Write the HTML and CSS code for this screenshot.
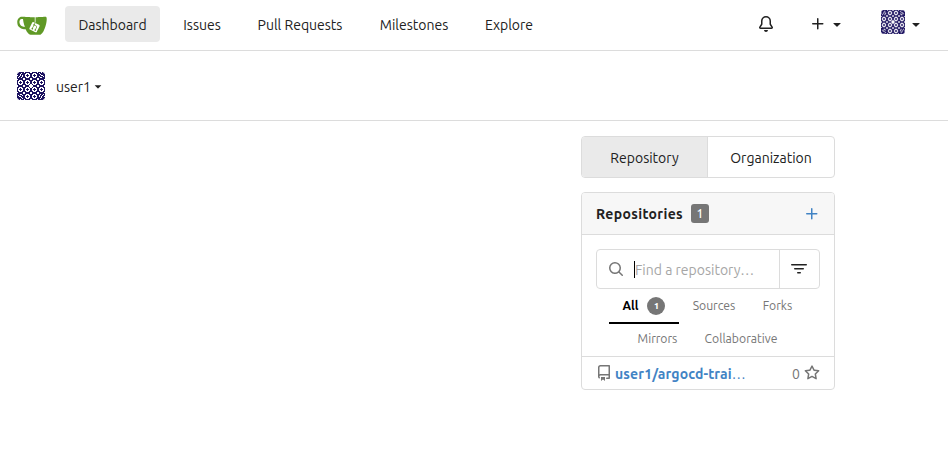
FILE: index.html
```html
<!DOCTYPE html>
<html lang="en">
<head>
<meta charset="utf-8">
<title>user1 - Dashboard</title>
<link rel="stylesheet" href="styles.css">
</head>
<body>
<svg class="defs" width="0" height="0" aria-hidden="true">
  <defs>
    <pattern id="rings" width="7" height="7" patternUnits="userSpaceOnUse">
      <rect width="7" height="7" fill="#1c1260"/>
      <path d="M2 1h3v1h1v3H5v1H2V5H1V2h1z" fill="#fff"/>
      <path d="M3 2h1v1h1v1H4v1H3V4H2V3h1z" fill="#1c1260"/>
      <path d="M0 0h1v1H0zM6 0h1v1H6zM0 6h1v1H0zM6 6h1v1H6z" fill="#fff"/>
    </pattern>
    <g id="corner">
      <rect width="7" height="7" fill="#1c1260"/>
      <path d="M0 0h2v1H1v1H0zM4 1h1v1H4zM3 2h1v2H3zM2 4h1v1H2zM1 5h1v1H1zM5 3h1v2H5zM4 5h1v1H4zM6 6h1v1H6zM0 3h1v1H0z" fill="#fff"/>
    </g>
    <symbol id="identicon" viewBox="0 0 28 28">
      <rect width="28" height="28" fill="url(#rings)"/>
      <use href="#corner"/>
      <use href="#corner" transform="translate(28 0) rotate(90)"/>
      <use href="#corner" transform="translate(28 28) rotate(180)"/>
      <use href="#corner" transform="translate(0 28) rotate(270)"/>
      <path d="M13 12h2v1h1v2h-1v1h-2v-1h-1v-2h1z" fill="#fff"/>
    </symbol>
    <symbol id="caret" viewBox="0 0 16 16"><path d="m4.427 7.427 3.396 3.396a.25.25 0 0 0 .354 0l3.396-3.396A.25.25 0 0 0 11.396 7H4.604a.25.25 0 0 0-.177.427"/></symbol>
    <symbol id="plus" viewBox="0 0 16 16"><path d="M7.75 2a.75.75 0 0 1 .75.75V7h4.25a.75.75 0 0 1 0 1.5H8.5v4.25a.75.75 0 0 1-1.5 0V8.5H2.75a.75.75 0 0 1 0-1.5H7V2.75A.75.75 0 0 1 7.75 2"/></symbol>
  </defs>
</svg>
<nav class="navbar">
  <a class="logo"><svg width="30" height="30" viewBox="0 0 640 640">
    <path fill="#fff" d="m395.9 484.2-126.9-61c-12.5-6-17.9-21.2-11.8-33.8l61-126.9c6-12.5 21.2-17.9 33.8-11.8 17.2 8.3 27.1 13 27.1 13l-.1-109.2 16.7-.1.1 117.1s57.4 24.2 83.1 40.1c3.7 2.3 10.2 6.8 12.9 14.4 2.1 6.1 2 13.1-1 19.3l-61 126.9c-6.2 12.7-21.4 18.1-33.9 12z"/>
    <path fill="#609926" d="M622.7 149.8c-4.1-4.1-9.6-4-9.6-4s-117.2 6.6-177.9 8c-13.3.3-26.5.6-39.6.7v117.2c-5.5-2.6-11.1-5.3-16.6-7.9 0-36.4-.1-109.2-.1-109.2-29 .4-89.2-2.2-89.2-2.2s-141.4-7.1-156.8-8.5c-9.8-.6-22.5-2.1-39 1.5-8.7 1.8-33.5 7.4-53.8 26.9C-4.9 212.4 6.6 276.2 8 285.8c1.7 11.7 6.9 44.2 31.7 72.5 45.8 56.1 144.4 54.8 144.4 54.8s12.1 28.9 30.6 55.5c25 33.1 50.7 58.9 75.7 62 63 0 188.9-.1 188.9-.1s12 .1 28.3-10.3c14-8.5 26.5-23.4 26.5-23.4S547 483 565 451.5c5.5-9.7 10.1-19.1 14.1-28 0 0 55.2-117.1 55.2-231.1-1.1-34.5-9.6-40.6-11.6-42.6zM125.6 353.9c-25.9-8.5-36.9-18.7-36.9-18.7S69.6 321.8 60 295.4c-16.5-44.2-1.4-71.2-1.4-71.2s8.4-22.5 38.5-30c13.8-3.7 31-3.1 31-3.1s7.1 59.4 15.7 94.2c7.2 29.2 24.8 77.7 24.8 77.7s-26.1-3.1-43-9.1zm300.3 107.6s-6.1 14.5-19.6 15.4c-5.8.4-10.3-1.2-10.3-1.2s-.3-.1-5.3-2.1l-112.9-55s-10.9-5.7-12.8-15.6c-2.2-8.1 2.7-18.1 2.7-18.1L322 273s4.8-9.7 12.2-13c.6-.3 2.3-1 4.5-1.5 8.1-2.1 18 2.8 18 2.8l110.7 53.7s12.6 5.7 15.3 16.2c1.9 7.4-.5 14-1.8 17.2-6.3 15.4-55 113.1-55 113.1z"/>
    <path fill="#609926" d="M326.8 380.1c-8.2.1-15.4 5.8-17.3 13.8-1.9 8 2 16.3 9.1 20 7.7 4 17.5 1.8 22.7-5.4 5.1-7.1 4.3-16.9-1.8-23.1l24-49.1c1.5.1 3.7.2 6.2-.5 4.1-.9 7.1-3.6 7.1-3.6 4.2 1.8 8.6 3.8 13.2 6.1 4.8 2.4 9.3 4.9 13.4 7.3.9.5 1.8 1.1 2.8 1.9 1.6 1.3 3.4 3.1 4.7 5.5 1.9 5.5-1.9 14.9-1.9 14.9-2.3 7.6-18.4 40.6-18.4 40.6-8.1-.2-15.3 5-17.7 12.5-2.6 8.1 1.1 17.3 8.9 21.3 7.8 4 17.4 1.7 22.5-5.3 5-6.8 4.6-16.3-1.1-22.6 1.9-3.7 3.7-7.4 5.6-11.3 5-10.4 13.5-30.4 13.5-30.4.9-1.7 5.7-10.3 2.7-21.3-2.5-11.4-12.6-16.7-12.6-16.7-12.2-7.9-29.2-15.2-29.2-15.2s0-4.1-1.1-7.1c-1.1-3.1-2.8-5.1-3.9-6.3 4.7-9.7 9.4-19.3 14.1-29-4.1-2-8.1-4-12.2-6.1-4.8 9.8-9.7 19.7-14.5 29.5-6.7-.1-12.9 3.5-16.1 9.4-3.4 6.3-2.7 14.1 1.9 19.8z"/>
  </svg></a>
  <a class="item active w-dashboard">Dashboard</a>
  <a class="item w-issues">Issues</a>
  <a class="item w-pulls">Pull Requests</a>
  <a class="item w-milestones">Milestones</a>
  <a class="item w-explore">Explore</a>
  <div class="right">
    <svg class="bell" width="16" height="16" viewBox="0 0 16 16"><path d="M8 16a2 2 0 0 0 1.985-1.75c.017-.137-.097-.25-.235-.25h-3.5c-.138 0-.252.113-.235.25A2 2 0 0 0 8 16M3 5a5 5 0 0 1 10 0v2.947q0 .078.042.139l1.703 2.555A1.519 1.519 0 0 1 13.482 13H2.518a1.516 1.516 0 0 1-1.263-2.36l1.703-2.554A.26.26 0 0 0 3 7.947Zm5-3.5A3.5 3.5 0 0 0 4.5 5v2.947c0 .346-.102.683-.294.97l-1.703 2.556a.017.017 0 0 0-.003.01l.001.006q0 .003.004.006l.006.004.007.001h10.964l.007-.001.006-.004.004-.006.001-.007a.02.02 0 0 0-.003-.01l-1.703-2.554a1.75 1.75 0 0 1-.294-.97V5A3.5 3.5 0 0 0 8 1.5"/></svg>
    <span class="menu create"><svg width="16" height="16"><use href="#plus"/></svg><svg width="16" height="16"><use href="#caret"/></svg></span>
    <span class="menu"><svg class="avatar" width="24" height="24"><use href="#identicon"/></svg><svg width="16" height="16"><use href="#caret"/></svg></span>
  </div>
</nav>
<header class="context">
  <svg class="avatar" width="28" height="28"><use href="#identicon"/></svg>
  <span class="username">user1</span>
  <svg width="14" height="14"><use href="#caret"/></svg>
</header>
<main class="dashboard">
  <div class="switcher"><a class="active">Repository</a><a class="org">Organization</a></div>
  <section class="panel">
    <h4><span class="title">Repositories</span><span class="label">1</span><svg width="16" height="16"><use href="#plus"/></svg></h4>
    <div class="filters">
      <div class="search">
        <div class="field">
          <svg width="16" height="16" viewBox="0 0 16 16"><path d="M10.68 11.74a6 6 0 0 1-7.922-8.982 6 6 0 0 1 8.982 7.922l3.04 3.04a.749.749 0 0 1-.326 1.275.75.75 0 0 1-.734-.215ZM11.5 7a4.499 4.499 0 1 0-8.997 0A4.499 4.499 0 0 0 11.5 7"/></svg>
          <span class="cursor"></span><span class="placeholder">Find a repository…</span>
        </div>
        <div class="filter"><svg width="16" height="16" viewBox="0 0 16 16"><path d="M.75 3h14.5a.75.75 0 0 1 0 1.5H.75a.75.75 0 0 1 0-1.5M3 7.75A.75.75 0 0 1 3.75 7h8.5a.75.75 0 0 1 0 1.5h-8.5A.75.75 0 0 1 3 7.75m3 4a.75.75 0 0 1 .75-.75h2.5a.75.75 0 0 1 0 1.5h-2.5a.75.75 0 0 1-.75-.75"/></svg></div>
      </div>
      <div class="tabs">
        <a class="active"><span>All</span><b class="count">1</b></a><a class="w-sources">Sources</a><a class="w-forks">Forks</a>
      </div>
      <div class="tabs second"><a class="w-mirrors">Mirrors</a><a class="w-collab">Collaborative</a></div>
    </div>
    <div class="repo">
      <svg width="16" height="16" viewBox="0 0 16 16"><path d="M2 2.5A2.5 2.5 0 0 1 4.5 0h8.75a.75.75 0 0 1 .75.75v12.5a.75.75 0 0 1-.75.75h-2.5a.75.75 0 0 1 0-1.5h1.75v-2h-8a1 1 0 0 0-.714 1.7.75.75 0 1 1-1.072 1.05A2.5 2.5 0 0 1 2 11.5Zm10.5-1h-8a1 1 0 0 0-1 1v6.708A2.5 2.5 0 0 1 4.5 9h8ZM5 12.25a.25.25 0 0 1 .25-.25h3.5a.25.25 0 0 1 .25.25v3.25a.25.25 0 0 1-.4.2l-1.45-1.087a.25.25 0 0 0-.3 0L5.4 15.7a.25.25 0 0 1-.4-.2Z"/></svg>
      <span class="name">user1/argocd-trai<span class="dots">…</span></span>
      <span class="stars">0</span>
      <svg width="16" height="16" viewBox="0 0 16 16"><path d="M8 .25a.75.75 0 0 1 .673.418l1.882 3.815 4.21.612a.75.75 0 0 1 .416 1.279l-3.046 2.97.719 4.192a.751.751 0 0 1-1.088.791L8 12.347l-3.766 1.98a.75.75 0 0 1-1.088-.79l.72-4.194L.818 6.374a.75.75 0 0 1 .416-1.28l4.21-.611L7.327.668A.75.75 0 0 1 8 .25m0 2.445L6.615 5.5a.75.75 0 0 1-.564.41l-3.097.45 2.24 2.184a.75.75 0 0 1 .216.664l-.528 3.084 2.769-1.456a.75.75 0 0 1 .698 0l2.77 1.456-.53-3.084a.75.75 0 0 1 .216-.664l2.24-2.183-3.096-.45a.75.75 0 0 1-.564-.41z"/></svg>
    </div>
  </section>
</main>
</body>
</html>
```
FILE: styles.css
```css
* { box-sizing: border-box; }
body { margin: 0; background: #fff; color: #212121; font: 14px/20px Ubuntu, "Noto Sans", sans-serif; }
svg { fill: currentColor; flex: none; display: block; }
a, span { white-space: nowrap; }
.defs { position: absolute; }
.avatar { border-radius: 3px; }

.navbar { height: 51px; padding: 0 20px 3px 17px; border-bottom: 1px solid #dcdcdc; display: flex; align-items: center; }
.logo { margin-right: 18px; padding-top: 2px; }
.item { height: 36px; line-height: 38px; margin-right: 10px; border-radius: 4px; text-align: center; }
.item.active { background: #eaeaea; }
.w-dashboard { width: 95px; }
.w-issues { width: 64px; }
.w-pulls { width: 112px; }
.w-milestones { width: 96px; }
.w-explore { width: 74px; }
.right { margin-left: auto; display: flex; align-items: center; }
.bell { margin-right: 36px; }
.menu { display: flex; align-items: center; gap: 3px; margin-right: 4px; }
.menu + .menu { margin: -4px 4px 0 36px; }
.menu .avatar + svg { margin-top: 4px; }
.create { margin-right: 0; }

.context { height: 70px; padding: 0 17px; border-bottom: 1px solid #dcdcdc; display: flex; align-items: center; }
.username { width: 35px; margin-left: 11px; padding-top: 2px; }

.dashboard { width: 254px; margin: 15px 0 0 581px; }
.switcher { display: flex; height: 42px; border: 1px solid #dcdcdc; border-radius: 4px; line-height: 42px; text-align: center; overflow: hidden; }
.switcher a { width: 126px; }
.switcher .active { background: #eaeaea; border-right: 1px solid #dcdcdc; }

.panel { margin-top: 14px; border: 1px solid #dcdcdc; border-radius: 4px; overflow: hidden; }
h4 { margin: 0; height: 42px; padding: 0 14px; background: #f7f7f7; border-bottom: 1px solid #dcdcdc; display: flex; align-items: center; font-size: 14px; font-weight: 600; }
h4 svg { margin-left: auto; color: #4183c4; }
.title { width: 95px; letter-spacing: .35px; }
.label { width: 18px; height: 19px; border-radius: 3px; background: #767676; color: #fff; font-size: 12px; line-height: 19px; font-weight: 500; text-align: center; }

.filters { padding: 14px 14px 0; height: 121px; }
.search { display: flex; height: 40px; border: 1px solid #dcdcdc; border-radius: 4px; }
.field { flex: 1; padding-left: 11px; display: flex; align-items: center; color: #767676; }
.cursor { width: 1px; height: 17px; margin-left: 10px; background: #000; }
.placeholder { color: #a6a6a6; padding-top: 1px; }
.filter { width: 40px; padding-right: 1px; border-left: 1px solid #dcdcdc; display: flex; align-items: center; justify-content: center; }
.tabs { display: flex; height: 35px; padding-left: 13px; font-size: 12.2px; line-height: 33px; color: #767676; text-align: center; }
.tabs .active { width: 70px; border-bottom: 2px solid #000; color: #000; font-weight: 600; display: flex; align-items: center; justify-content: center; gap: 9px; }
.count { width: 18px; height: 18px; border-radius: 50%; background: #767676; color: #fff; font-size: 9px; line-height: 18px; }
.w-sources { width: 70px; }
.w-forks { width: 57px; }
.tabs.second { padding-left: 28px; line-height: 29px; }
.w-mirrors { width: 67px; }
.w-collab { width: 100px; }

.repo { height: 33px; border-top: 1px solid #dcdcdc; padding: 0 14px; display: flex; align-items: center; color: #767676; }
.name { margin-left: 3px; padding-top: 2px; flex: 1; color: #4183c4; font-weight: 700; letter-spacing: .13px; }
.dots { font-weight: 400; }
.stars { margin-right: 4px; padding-top: 2px; }
```
